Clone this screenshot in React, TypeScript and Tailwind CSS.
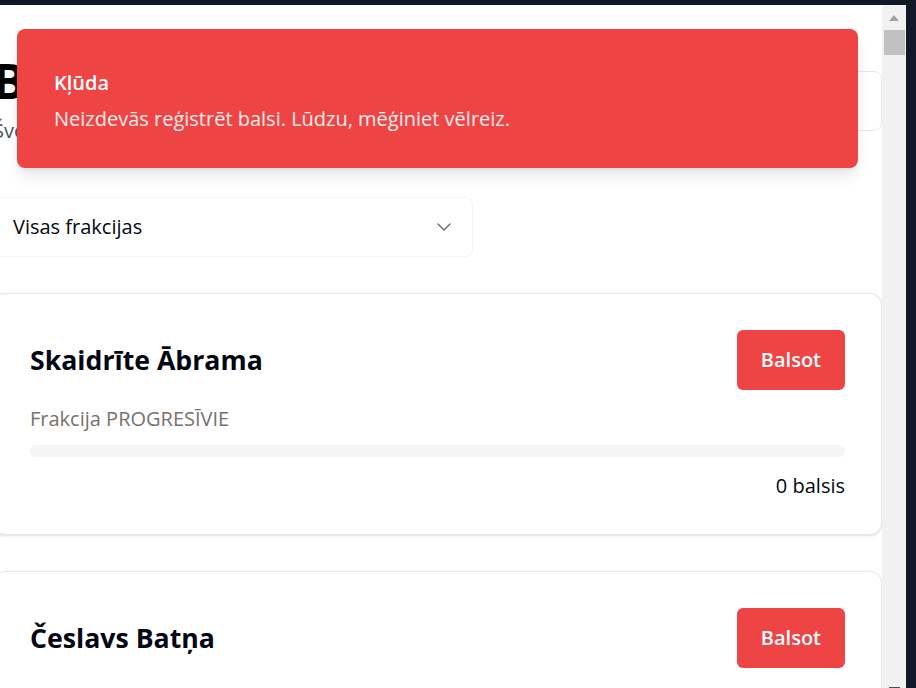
import { ChevronDown } from "lucide-react";

const candidates = [
  { name: "Skaidrīte Ābrama", party: "Frakcija PROGRESĪVIE", votes: "0 balsis" },
  { name: "Česlavs Batņa", party: "Frakcija SASKAŅA", votes: "0 balsis" },
];

const App = () => {
  return (
    <div
      className="h-[688px] w-[916px] overflow-hidden bg-[#111827]"
      style={{ fontFamily: '"Open Sans", "Noto Sans", sans-serif' }}
    >
      <div className="relative mt-[5px] mr-[10px] flex h-[683px] bg-white">
        {/* Page content */}
        <div className="flex-1 overflow-hidden">
          <div className="-ml-[7px] w-[889px]">
            {/* Header */}
            <div className="flex items-center justify-between pt-[52px]">
              <div>
                <h1 className="text-5xl font-bold leading-none text-black">Balsošana</h1>
                <p className="mt-3 text-xl text-gray-600">Šveices padomes deputātu balsojums</p>
              </div>
              <button className="h-[60px] rounded-lg border border-gray-200 px-6 text-xl text-gray-900">
                Rezultāti
              </button>
            </div>

            {/* Filter */}
            <div className="mt-[52px] flex h-[60px] w-[480px] items-center justify-between rounded-lg border border-gray-100 pl-[19px] pr-4">
              <span className="text-xl text-gray-950">Visas frakcijas</span>
              <ChevronDown className="h-6 w-6 text-gray-500" strokeWidth={1.5} />
            </div>

            {/* Candidate cards */}
            <div className="mt-[36px] flex flex-col gap-9">
              {candidates.map((c) => (
                <div
                  key={c.name}
                  className="rounded-xl border border-gray-200 bg-white px-9 pb-[34px] pt-9 shadow-sm"
                >
                  <div className="flex items-center justify-between">
                    <h2 className="text-[26.7px] font-bold leading-8 text-gray-950">{c.name}</h2>
                    <button className="rounded-md bg-[#ef4444] px-6 py-4 text-xl font-semibold leading-7 text-white">
                      Balsot
                    </button>
                  </div>
                  <p className="mt-[15px] text-xl leading-7 text-stone-500">{c.party}</p>
                  <div className="mt-3 h-3 w-full rounded-full bg-stone-100" />
                  <p className="mt-[15px] text-right text-xl leading-7 text-gray-950">{c.votes}</p>
                </div>
              ))}
            </div>
          </div>
        </div>

        {/* Scrollbar */}
        <div className="flex w-6 flex-col items-center bg-[#f1f1f1]">
          <div className="mt-[10px] h-0 w-0 border-x-[5px] border-b-[6px] border-x-transparent border-b-[#a3a3a3]" />
          <div className="mt-[9px] h-[25px] w-[21px] bg-[#c1c1c1]" />
          <div className="mt-auto h-px w-[11px] bg-[#505050]" />
        </div>

        {/* Toast */}
        <div className="absolute left-[17px] top-[24px] w-[841px] rounded-lg bg-[#ef4444] px-[37px] pb-[35px] pt-10 shadow-lg">
          <p className="text-xl font-semibold leading-7 text-white">Kļūda</p>
          <p className="mt-2 text-xl leading-7 text-white/90">Neizdevās reģistrēt balsi. Lūdzu, mēģiniet vēlreiz.</p>
        </div>
      </div>
    </div>
  );
};

export default App;
